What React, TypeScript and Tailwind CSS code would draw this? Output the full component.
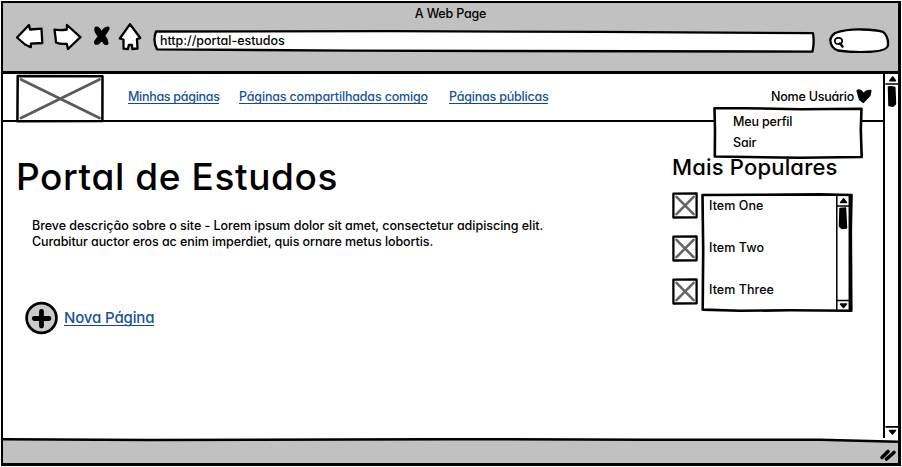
import type { ReactNode } from "react";

function Sketch({ box, className = "", children }: { box: string; className?: string; children: ReactNode }) {
  return (
    <svg
      viewBox={box}
      className={`block shrink-0 ${className}`}
      fill="none"
      stroke="#000"
      strokeWidth="2.3"
      strokeLinejoin="round"
      strokeLinecap="round"
      aria-hidden="true"
    >
      {children}
    </svg>
  );
}

function Toolbar() {
  return (
    <div className="flex h-[32px] items-start pl-[12px]">
      <Sketch box="15 22 30 29" className="h-[29px] w-[30px]">
        <path fill="#fff" d="M17 37.5 29 25 30 29.5 41.5 28.7 42.3 43 31 43.6 30.8 47.2 25 44.5Z" />
      </Sketch>
      <Sketch box="52 22 30 29" className="ml-[7px] h-[29px] w-[30px]">
        <path fill="#fff" d="M54.5 29.700Q61 30.5 66.8 29.5L67 25 80.4 37.2 68 49 66.700 43.8Q60 44.3 56 42.5L55.6 38Z" />
      </Sketch>
      <Sketch box="92 22 20 29" className="ml-[10px] h-[29px] w-[20px]">
        <path fill="#000" strokeWidth="1.6" d="M95.500 27.500Q99 26.500 101.500 32.500Q104 27.500 108 27.200Q109.500 28 108.500 29.500L104.500 35.800Q107.500 39 107.800 43.500Q104.500 46 101.800 39.500Q99 44.500 95.500 44Q94 42 95.800 40L98.800 36Q95 33 95 29Z" />
      </Sketch>
      <Sketch box="118 22 24 29" className="ml-[6px] h-[29px] w-[24px]">
        <path fill="#fff" d="M130 24.200 140.300 38 137 39.200 137.500 48.500 132.300 49 132 45 128.800 45 128 49 123.500 48.700 123.500 39.500 119.800 38.500Z" />
      </Sketch>
      <div className="relative ml-[11px] h-[31px] w-[664px]">
        <Sketch box="153 22 664 31" className="absolute inset-0 h-[31px] w-[664px]">
          <path fill="#fff" d="M156 31.500 390 31.200 600 31.800 813 33.200Q814.500 42 812.500 51.600L500 51 350 50.700 157 49.300Q152.500 41 156 31.500Z" />
        </Sketch>
        <span className="relative block pl-[7px] pt-[11px] text-[12.5px] leading-4 tracking-[-0.03px]">http://portal-estudos</span>
      </div>
      <Sketch box="829 22 62 31" className="ml-[12px] h-[31px] w-[62px]">
        <path fill="#fff" d="M835 33Q847 29 862 29.500Q876 29.700 883 31.800Q888.500 36 888 45Q887.500 50.500 872 51.700Q855 53 838 50.500Q830.500 48 830.300 40Q831 36 835 33Z" />
        <ellipse cx="838.500" cy="41" rx="3.700" ry="3.200" strokeWidth="1.800" />
        <path d="M840 43.500 842.500 46.500" strokeWidth="2.500" />
      </Sketch>
    </div>
  );
}

function Thumbnail() {
  return (
    <Sketch box="0 0 26 27" className="h-[27px] w-[26px]">
      <path d="M1.400 1.700 24.600 1.300 24.600 25.300 1.400 25.500Z" />
      <path d="M4.500 4.800 21.600 22.200M21.600 4.800 4.500 22.200" stroke="#656565" strokeWidth="2.600" />
    </Sketch>
  );
}

function PageScrollbar() {
  return (
    <div className="flex w-[15px] flex-col justify-between border-l-2 border-black">
      <Sketch box="885 74 13 34" className="h-[34px] w-[13px]">
        <path d="M886 84H898" strokeWidth="1.700" />
        <path fill="#000" d="M889.800 80.800 892.700 77 895.500 80.800Z" strokeWidth="1.500" />
        <path fill="#000" d="M888.500 87 891 86.700 894.800 87.500 895.500 104 893 106.200 889 105.500Z" strokeWidth="1.500" />
      </Sketch>
      <Sketch box="885 427 13 13" className="h-[13px] w-[13px]">
        <path d="M886 428.800H898" strokeWidth="1.700" />
        <path fill="#000" d="M889.500 432.500 895.500 432.500 892.400 436Z" strokeWidth="1.500" />
      </Sketch>
    </div>
  );
}

function NavBar() {
  return (
    <nav className="relative flex h-[48px] items-start border-b-2 border-black pl-[13px]">
      <Sketch box="16 74 88 49" className="h-[49px] w-[88px]">
        <path fill="#fff" d="M17.700 76 102.500 76.300 102.400 121 17.400 121.200Z" strokeWidth="2.500" />
        <path d="M21 79.500 99.500 118M99.500 79.500 21 118" stroke="#5b5b5b" strokeWidth="2.800" />
      </Sketch>
      <a className="ml-[24px] mt-[15px] h-[15px] w-[91px] whitespace-nowrap border-b border-[#0a4b94] text-[12.5px] leading-4 tracking-[-0.29px] text-[#1b5299]">Minhas páginas</a>
      <a className="ml-[20px] mt-[15px] h-[15px] w-[188px] whitespace-nowrap border-b border-[#0a4b94] text-[12.5px] leading-4 tracking-[-0.17px] text-[#1b5299]">Páginas compartilhadas comigo</a>
      <a className="ml-[22px] mt-[15px] h-[15px] w-[99px] whitespace-nowrap border-b border-[#0a4b94] text-[12.5px] leading-4 tracking-[-0.21px] text-[#1b5299]">Páginas públicas</a>
      <span className="ml-[223px] mt-[15px] w-[83px] whitespace-nowrap text-[12.5px] leading-4 tracking-[-0.22px]">Nome Usuário</span>
      <Sketch box="855 88 18 16" className="ml-px mt-[14px] h-[16px] w-[18px]">
        <path fill="#000" strokeWidth="1.200" d="M857 90.500Q860.500 88.500 863.500 93.500Q866 90 871 90.300L870 95.500 863.300 102.500 859.500 99.500Z" />
      </Sketch>
      <div className="absolute left-[710px] top-[32px] z-10 h-[54px] w-[151px]">
        <Sketch box="713 106 151 54" className="absolute inset-0 h-[54px] w-[151px]">
          <path fill="#fff" strokeWidth="2.600" d="M714.500 108.300 745 108.200 800 109.200 861.500 108.700 860.800 130 861.700 157 800 157.800 714.800 156.500 715 130Z" />
        </Sketch>
        <div className="relative flex flex-col gap-[5px] pl-[20px] pt-[8px] text-[12.5px] leading-4 tracking-[-0.15px]">
          <span className="whitespace-nowrap">Meu perfil</span>
          <span className="whitespace-nowrap">Sair</span>
        </div>
      </div>
    </nav>
  );
}

function PopularPages() {
  return (
    <aside className="w-[200px] pt-[31px]">
      <h2 className="h-[28px] whitespace-nowrap text-[22px] leading-7 tracking-[0.18px]">Mais Populares</h2>
      <div className="mt-[12px] flex gap-[3px]">
        <div className="-mt-px flex flex-col gap-[16px]">
          <Thumbnail />
          <Thumbnail />
          <Thumbnail />
        </div>
        <div className="relative h-[120px] w-[153px]">
          <Sketch box="701 193 153 120" className="absolute inset-0 h-[120px] w-[153px]">
            <path strokeWidth="2.600" d="M702.500 195 760 194.800 820 194.400 851.500 195 850.800 230 851.300 310.800 790 310.300 740 310.800 702.700 309.600 703.200 250Z" />
            <path strokeWidth="1.500" d="M836.800 196V310M837 206H850M837 300.500H850" />
            <path strokeWidth="2.500" d="M849.800 196V310" />
            <path fill="#000" strokeWidth="1.500" d="M840.700 202.500 843.600 198.800 846.500 202.500ZM840.500 304 846.500 304 843.500 307.500ZM840 208.500 845.500 208 846.500 228 842 228.500 839.500 226.500Z" />
          </Sketch>
          <ul className="relative flex flex-col gap-[26px] pl-[8px] pt-[5px] text-[12.5px] leading-4 tracking-[0.05px]">
            <li>Item One</li>
            <li>Item Two</li>
            <li>Item Three</li>
          </ul>
        </div>
      </div>
    </aside>
  );
}

function Intro() {
  return (
    <section className="w-[669px]">
      <h1 className="whitespace-nowrap pl-[13px] pt-[31px] text-[37px] font-medium leading-[48px] tracking-[0.6px]">Portal de Estudos</h1>
      <p className="mt-[17px] pl-[29px] text-[12.5px] leading-4 tracking-[-0.03px]">
        <span className="block whitespace-nowrap">Breve descrição sobre o site - Lorem ipsum dolor sit amet, consectetur adipiscing elit.</span>
        <span className="block whitespace-nowrap tracking-[-0.08px]">Curabitur auctor eros ac enim imperdiet, quis ornare metus lobortis.</span>
      </p>
      <div className="mt-[51px] flex items-start pl-[22px]">
        <Sketch box="25 301 34 34" className="h-[34px] w-[34px]">
          <circle cx="41.500" cy="318" r="14.900" fill="#cbcbcb" strokeWidth="2.700" />
          <path d="M34.300 318.500H49M41.500 311.500V326" strokeWidth="4.800" />
        </Sketch>
        <a className="ml-[5px] mt-[7px] h-[18px] w-[90px] whitespace-nowrap border-b border-[#0a4b94] text-[15px] leading-5 tracking-[-0.14px] text-[#1b5299]">Nova Página</a>
      </div>
    </section>
  );
}

export default function App() {
  return (
    <div className="h-[467px] w-[902px] overflow-hidden bg-white pl-px pt-px font-['Inter','Noto_Sans',sans-serif] font-[450] text-black [font-feature-settings:'cv11']">
      <div className="flex h-[465px] w-[900px] flex-col border-2 border-b-[3px] border-r-[3px] border-black">
        <header className="h-[71px] border-b-[3px] border-black bg-[#c1c1c1]">
          <div className="h-[19px] pt-[3px] text-center text-[12.5px] leading-4 tracking-[-0.2px]">A Web Page</div>
          <Toolbar />
        </header>
        <div className="flex h-[364px]">
          <main className="w-[880px]">
            <NavBar />
            <div className="flex">
              <Intro />
              <PopularPages />
            </div>
          </main>
          <PageScrollbar />
        </div>
        <footer className="flex h-[25px] bg-[#c1c1c1]">
          <Sketch box="3 438 895 25" className="h-[25px] w-[895px]">
            <path fill="#fff" stroke="none" d="M3 438H898V442L820 440 3 440Z" />
            <path strokeWidth="2.500" d="M3 439.300 150 440 450 439.200 650 439.700 820 439.800 898 441.800" />
            <path strokeWidth="3.600" d="M882 457.500 888 451.500M886.500 459 894 452.500" />
          </Sketch>
        </footer>
      </div>
    </div>
  );
}
